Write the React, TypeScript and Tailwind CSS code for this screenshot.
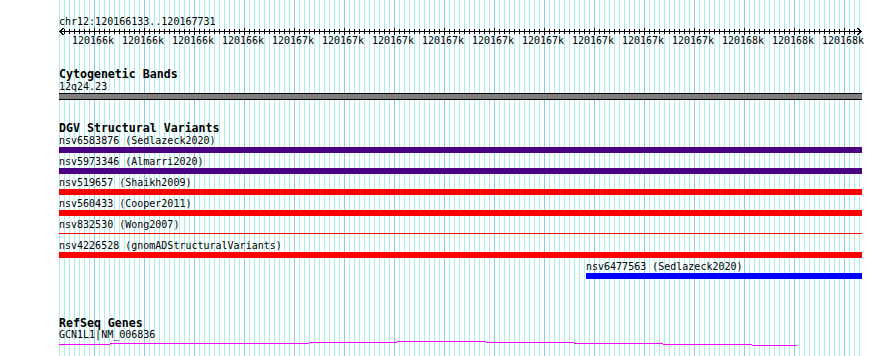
import React from "react";

const rulerLabels = [
  ...Array(4).fill("120166k"),
  ...Array(9).fill("120167k"),
  ...Array(3).fill("120168k"),
];

const variants = [
  { label: "nsv6583876 (Sedlazeck2020)", bar: "bg-[#4b0082]" },
  { label: "nsv5973346 (Almarri2020)", bar: "bg-[#4b0082]" },
  { label: "nsv519657 (Shaikh2009)", bar: "bg-[#ff0000]" },
  { label: "nsv560433 (Cooper2011)", bar: "bg-[#ff0000]" },
  { label: "nsv832530 (Wong2007)", bar: "thin" },
  { label: "nsv4226528 (gnomADStructuralVariants)", bar: "bg-[#ff0000]" },
];

// intron line of the gene, as [x0, x1, y] in track coordinates
const geneSegments = [
  [0, 51, 4],
  [51, 150, 3],
  [150, 250, 3],
  [250, 338, 2],
  [338, 427, 1],
  [427, 515, 2],
  [515, 604, 3],
  [604, 693, 4],
  [693, 738, 5],
];

function Ruler() {
  const ticks = Array.from({ length: 159 }, (_, i) => i + 1);
  return (
    <svg width={803} height={8} className="block" shapeRendering="crispEdges">
      <line x1={1} y1={4.5} x2={802} y2={4.5} stroke="#000" />
      {ticks.map((k) => {
        const x = k * 5 + 0.5;
        const major = (k * 5 - 35) % 50 === 0;
        return (
          <line
            key={k}
            x1={x}
            x2={x}
            y1={major ? 1 : 2}
            y2={major ? 8 : 7}
            stroke="#000"
          />
        );
      })}
      <polyline points="4.5,1 1,4.5 4.5,8" fill="none" stroke="#000" />
      <polyline points="798.5,1 802,4.5 798.5,8" fill="none" stroke="#000" />
    </svg>
  );
}

export default function App() {
  return (
    <div className="w-[890px] h-[356px] overflow-hidden bg-white text-black font-['DejaVu_Sans_Mono',monospace]">
      <div className="ml-[59px] w-[803px] h-full flex flex-col [background-image:repeating-linear-gradient(to_right,transparent_0_35px,#88ccee_35px_36px,transparent_36px_50px),repeating-linear-gradient(to_right,#aaeeee_0_1px,transparent_1px_5px)]">
        {/* Ruler */}
        <div className="mt-[16px] text-[10px] leading-[11px]">
          chr12:120166133..120167731
        </div>
        <Ruler />
        <div className="flex pl-[9px] text-[10px] leading-[11px] whitespace-nowrap">
          {rulerLabels.map((l, i) => (
            <div key={i} className="w-[50px] shrink-0 text-center">
              {l}
            </div>
          ))}
        </div>

        {/* Cytogenetic Bands */}
        <div className="mt-[22px] text-[11.6px] leading-[12px] font-bold">
          Cytogenetic Bands
        </div>
        <div className="mt-px text-[10px] leading-[11px]">12q24.23</div>
        <div className="mt-px h-[7px] border-y border-black bg-[#808080]" />

        {/* DGV Structural Variants */}
        <div className="mt-[22px] text-[11.6px] leading-[12px] font-bold">
          DGV Structural Variants
        </div>
        <div className="mt-px flex flex-col">
          {variants.map((v, i) => (
            <div key={i} className="pb-[3px]">
              <div className="text-[10px] leading-[11px] whitespace-nowrap">
                {v.label}
              </div>
              {v.bar === "thin" ? (
                <div className="mt-px h-[6px] pt-[2px]">
                  <div className="h-px bg-[#ff0000]" />
                </div>
              ) : (
                <div className={`mt-px h-[6px] ${v.bar}`} />
              )}
            </div>
          ))}
          <div className="ml-[527px] pb-[3px]">
            <div className="text-[10px] leading-[11px] whitespace-nowrap">
              nsv6477563 (Sedlazeck2020)
            </div>
            <div className="mt-px h-[6px] bg-[#0000ff]" />
          </div>
        </div>

        {/* RefSeq Genes */}
        <div className="mt-[35px] text-[11.6px] leading-[12px] font-bold">
          RefSeq Genes
        </div>
        <div className="text-[10px] leading-[11px]">GCN1L1|NM_006836</div>
        <svg width={740} height={6} className="block" shapeRendering="crispEdges">
          {geneSegments.map(([x0, x1, y], i) => (
            <rect key={i} x={x0} y={y} width={x1 - x0} height={1} fill="#ff00ff" />
          ))}
        </svg>
      </div>
    </div>
  );
}
